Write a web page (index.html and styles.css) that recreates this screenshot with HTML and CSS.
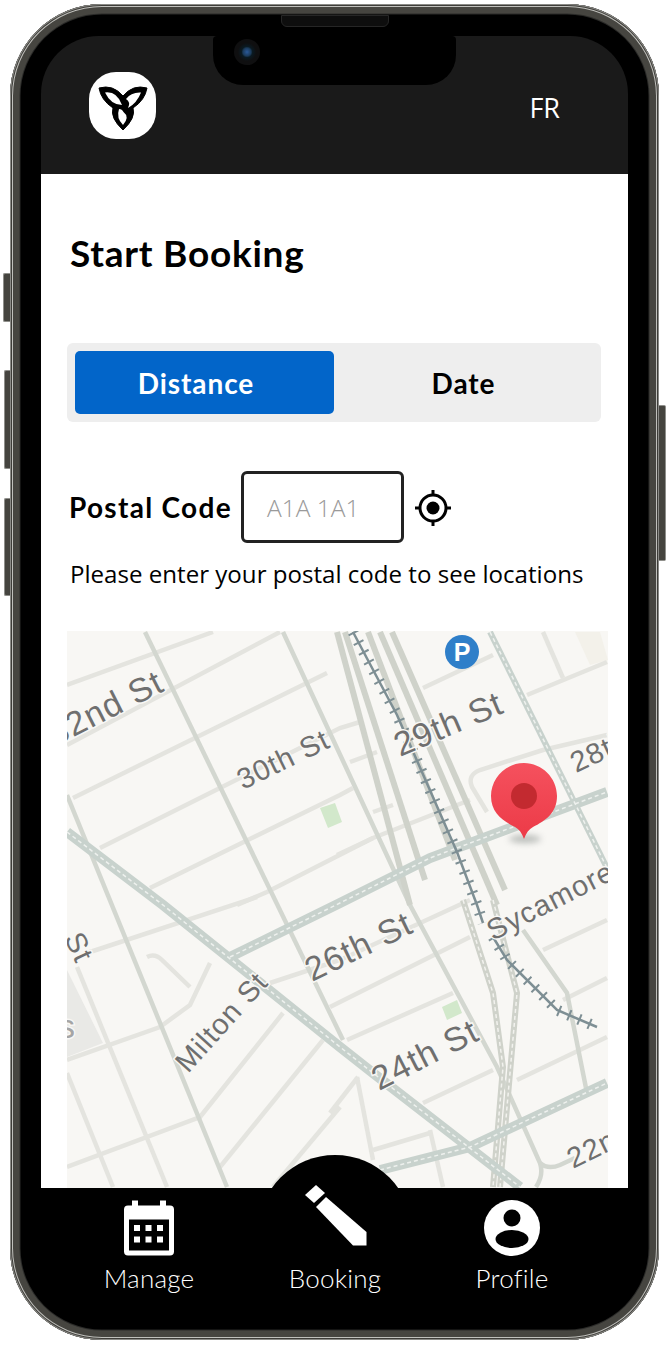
FILE: index.html
```html
<!DOCTYPE html>
<html lang="en">
<head>
<meta charset="utf-8">
<title>Start Booking</title>
<link rel="stylesheet" href="styles.css">
</head>
<body>
<div class="phone">
  <span class="side side-a"></span><span class="side side-b"></span><span class="side side-c"></span><span class="side side-d"></span>
  <span class="speaker"></span>
  <div class="notch"><span class="camera"></span></div>
  <div class="screen">
    <header class="top">
      <div class="logo">
        <svg viewBox="89 72 67 67" width="67" height="67">
          <path class="tri" d="M99 88Q113 84 123 96Q133 84 147 88Q145 100 133 108Q136 118 123 130Q110 118 113 108Q101 100 99 88Z"/>
          <path class="tri-in" d="M105 92.500Q117 91 122 105Q111 105 105 92.500Z"/>
          <path class="tri-in" d="M141 92.500Q131 92 126 99Q131 102 128 108Q137 103 141 92.500Z"/>
          <path class="tri-in" d="M123.500 112Q130 117 123 125Q116 118 119 109Q122 109 123.500 112Z"/>
        </svg>
      </div>
      <span class="lang">FR</span>
    </header>
    <main class="content">
      <h1 class="title">Start Booking</h1>
      <div class="tabs">
        <div class="tab tab-on">Distance</div>
        <div class="tab">Date</div>
      </div>
      <div class="postal">
        <span class="postal-label">Postal Code</span>
        <div class="postal-input">A1A 1A1</div>
        <svg class="locate" viewBox="0 0 36 36" width="36" height="36">
          <circle class="loc-ring" cx="18" cy="18" r="13"/>
          <circle cx="18" cy="18" r="6.500"/>
          <path class="loc-tick" d="M18 0V6M18 30V36M0 18H6M30 18H36"/>
        </svg>
      </div>
      <p class="help">Please enter your postal code to see locations</p>
      <svg class="map" viewBox="67 631 541 557" width="541" height="557">
        <rect class="map-bg" x="67" y="631" width="541" height="557"/>
        <polygon class="m-area" points="67,970 103,1043 67,1057"/>
        <polygon class="m-area m-area-light" points="575,632 600,632 608,660 590,665"/>
        <polygon class="m-park" points="320,808 335,803 342,822 328,828"/>
        <polygon class="m-park" points="442,1007 457,1000 462,1013 447,1020"/>
        <g class="m-minor">
          <path d="M67 685L213 632"/><path d="M67 745L280 632"/><path d="M73 798L327 673"/>
          <path d="M100 848L340 728L360 722"/><path d="M150 888L340 795L353 788"/><path d="M237 905L267 892L373 838"/>
          <path d="M423 688L493 655"/><path d="M527 695L607 662"/><path d="M543 632L563 678"/>
          <path d="M350 762L377 752"/><path d="M373 812L393 805"/>
          <path d="M607 735L543 750L480 770Q467 775 472 787L487 812"/>
          <path d="M87 953L257 897"/><path d="M147 957Q155 953 162 960L190 987"/>
          <path d="M67 1060L160 1027L190 1005L210 963"/><path d="M67 1167L200 1117L283 1013"/>
          <path d="M220 1167L323 1040"/><path d="M270 983L340 960L470 900"/><path d="M273 1187L340 1107"/>
          <path d="M77 967L167 1187"/><path d="M67 1073L113 1187"/>
          <path d="M330 1007L470 937"/><path d="M543 950L607 920"/><path d="M347 1040L453 993"/>
          <path d="M423 1103L493 1070"/><path d="M517 1080L607 1037"/><path d="M563 1000L607 978"/>
          <path d="M373 1150L430 1133"/><path d="M357 1077L373 1160"/><path d="M430 1130L443 1187"/><path d="M330 1113L358 1077"/>
          <path d="M337 855L373 838L470 800"/>
        </g>
        <g class="m-mid">
          <path d="M145 632L343 1040"/>
          <path d="M283 632L410 905L497 1067L540 1163Q544 1175 536 1187"/>
          <path d="M67 795L227 1187"/>
          <path d="M523 930L567 993L587 1093"/>
          <path d="M540 1163Q548 1170 560 1165L575 1158"/>
        </g>
        <g class="m-high">
          <path d="M337 632L410 905"/><path d="M345 632L425 880"/><path d="M368 632L455 860"/><path d="M380 632L497 905"/><path d="M392 632L505 890"/>
          <path d="M463 900L493 993L503 1067L493 1187"/><path d="M493 900L517 993L500 1187"/>
        </g>
        <g class="m-high-dash">
          <path d="M463 900L493 993L503 1067L493 1187"/><path d="M493 900L517 993L500 1187"/>
        </g>
        <g class="m-way">
          <path d="M67 832L163 905L340 1047L373 1073L520 1187"/>
          <path d="M230 957L340 903L430 858L607 792"/>
          <path d="M380 1170L470 1147L607 1083"/>
          <path class="m-way-thin" d="M490 632L607 868"/>
        </g>
        <g class="m-way-dash">
          <path d="M67 832L163 905L340 1047L373 1073L520 1187"/>
          <path d="M230 957L340 903L430 858L607 792"/>
          <path d="M380 1170L470 1147L607 1083"/>
          <path d="M490 632L607 868"/>
        </g>
        <g class="m-rail">
          <path d="M353 632L397 715L457 852L477 905L483 923"/>
          <path d="M493 937L507 960L520 973L557 1010L597 1027"/>
        </g>
        <g class="m-tie">
          <path d="M353 632L397 715L457 852L477 905L483 923"/>
          <path d="M493 937L507 960L520 973L557 1010L597 1027"/>
        </g>
        <text class="m-label" transform="translate(166 690) rotate(-27)" text-anchor="end">32nd St</text>
        <text class="m-label m-small" transform="translate(243 790) rotate(-26)">30th St</text>
        <text class="m-label" transform="translate(400 757) rotate(-23)">29th St</text>
        <text class="m-label m-small" transform="translate(576 773) rotate(-25)">28th</text>
        <text class="m-label m-small" transform="translate(493 941) rotate(-27)">Sycamore</text>
        <text class="m-label" transform="translate(312 982) rotate(-26)">26th St</text>
        <text class="m-label m-small" transform="translate(188 1074) rotate(-48)">Milton St</text>
        <text class="m-label" transform="translate(379 1091) rotate(-27)">24th St</text>
        <text class="m-label m-small" transform="translate(573 1169) rotate(-26)">22nd</text>
        <text class="m-label m-small" transform="translate(64 938) rotate(65)">St</text>
        <text class="m-label m-faint" x="58" y="1038">s</text>
        <circle class="m-p-bg" cx="462" cy="652" r="17"/>
        <text class="m-p" x="462" y="661" text-anchor="middle">P</text>
        <ellipse class="m-shadow" cx="525" cy="839" rx="16" ry="4"/>
        <defs>
          <linearGradient id="pinfill" x1="0" y1="0" x2="0" y2="1">
            <stop offset="0" stop-color="#f5515e"/>
            <stop offset="1" stop-color="#ec3a47"/>
          </linearGradient>
        </defs>
        <path fill="url(#pinfill)" d="M524 763C506 763 491 778 491 796C491 813 503 821 515 827C519 829 522 833 524 839C526 833 529 829 533 827C545 821 557 813 557 796C557 778 542 763 524 763Z"/>
        <circle class="m-pin-in" cx="524" cy="796" r="13"/>
      </svg>
    </main>
    <nav class="nav">
      <div class="nav-item">
        <svg class="nav-icon" viewBox="124 1201 50 55" width="50" height="55">
          <path class="w" d="M132 1201H138V1206H160V1201H166V1206H170Q174 1206 174 1210V1252Q174 1256 170 1256H128Q124 1256 124 1252V1210Q124 1206 128 1206H132Z"/>
          <rect class="k" x="129" y="1220" width="40" height="31"/>
          <path class="w" d="M134 1225.500h6v6h-6zM145.500 1225.500h6v6h-6zM157 1225.500h6v6h-6zM134 1237h6v6h-6zM145.500 1237h6v6h-6zM157 1237h6v6h-6z"/>
        </svg>
        <span class="nav-text">Manage</span>
      </div>
      <div class="nav-item">
        <svg class="nav-icon nav-pencil" viewBox="303 1183 63 63" width="63" height="63">
          <path class="w" d="M304 1195L315 1185L324 1193L313 1203Z"/>
          <path class="w" d="M315 1207L325 1197L365.500 1232V1245.500H352Z"/>
        </svg>
        <span class="nav-text">Booking</span>
      </div>
      <div class="nav-item">
        <svg class="nav-icon" viewBox="484 1200 56 56" width="56" height="56">
          <circle class="w" cx="512" cy="1228" r="28"/>
          <circle class="k" cx="512" cy="1218" r="8.500"/>
          <ellipse class="k" cx="512" cy="1239" rx="16.500" ry="9"/>
        </svg>
        <span class="nav-text">Profile</span>
      </div>
    </nav>
  </div>
</div>
</body>
</html>
```
FILE: styles.css
```css
* { box-sizing: border-box; }
html, body { margin: 0; padding: 0; background: #fff; }
body { width: 672px; height: 1348px; overflow: hidden; font-family: "Open Sans", sans-serif; }

.phone {
  position: relative;
  width: 649px;
  height: 1336px;
  margin: 4px 0 0 10px;
  padding: 32px 31px 12px;
  background: #000;
  border-radius: 92px;
  box-shadow:
    inset 0 0 0 1px #8a8a86,
    inset 0 0 0 2px #3e3d39,
    inset 0 0 0 3px #c0c0bc,
    inset 0 0 0 9.500px #464540,
    inset 0 0 0 10.500px #2a2a28;
}
.side { position: absolute; width: 7px; background: #45443f; border: 1px solid #8f8f8b; border-right: 0; border-radius: 2px 0 0 2px; }
.side-a { left: -7px; top: 269px; height: 49px; }
.side-b { left: -6px; top: 366px; height: 99px; width: 6px; }
.side-c { left: -6px; top: 494px; height: 98px; width: 6px; }
.side-d { left: 649px; top: 401px; height: 156px; width: 7px; border: 1px solid #8f8f8b; border-left: 0; border-radius: 0 2px 2px 0; }
.speaker { position: absolute; left: 271px; top: 11px; width: 108px; height: 12px; background: #0e0e0e; border: 1px solid #262626; border-radius: 0 0 6px 6px; z-index: 3; }
.notch { position: absolute; left: 203px; top: 32px; width: 243px; height: 49px; background: #000; border-radius: 4px 4px 30px 30px; z-index: 2; }
.camera { position: absolute; left: 21px; top: 3px; width: 26px; height: 26px; border-radius: 50%; background: radial-gradient(circle at 50% 50%, #2a5a9a 0, #1b3a5a 22%, #0a1a22 30%, #0f0f10 50%, #0f0f10 100%); }

.screen { width: 587px; height: 1292px; display: flex; flex-direction: column; }

.top { height: 138px; flex: none; background: #1a1a1a; border-radius: 58px 58px 0 0; display: flex; align-items: flex-start; justify-content: space-between; padding: 36px 68px 0 48px; }
.logo { width: 67px; height: 67px; background: #fff; border-radius: 27px; }
.logo svg { display: block; }
.tri { fill: #000; stroke: #000; stroke-width: 1; stroke-linejoin: miter; }
.tri-in { fill: #fff; }
.lang { margin-top: 17px; color: #fff; font-size: 27px; line-height: 37px; }

.content { height: 1014px; flex: none; background: #fff; padding: 0 0 0 26px; overflow: hidden; }
.title { margin: 0; padding-top: 56px; height: 169px; font-family: Lato, sans-serif; font-weight: 700; font-size: 37px; letter-spacing: .75px; line-height: 46px; color: #000; padding-left: 3px; }
.tabs { width: 534px; height: 79px; padding: 8px; background: #eeeeee; border-radius: 6px; display: flex; }
.tab { width: 259px; flex: none; display: flex; align-items: center; justify-content: center; font-family: Lato, sans-serif; font-weight: 700; font-size: 28px; letter-spacing: .9px; color: #000; border-radius: 5px; }
.tab-on { background: #0265c9; color: #fff; padding-right: 17px; }
.postal { display: flex; align-items: center; margin-top: 49px; height: 72px; }
.postal-label { width: 174px; padding-left: 2px; font-family: Lato, sans-serif; font-weight: 700; font-size: 28px; letter-spacing: 1.300px; color: #000; white-space: nowrap; flex: none; }
.postal-input { width: 163px; height: 72px; flex: none; border: 3px solid #222; border-radius: 6px; padding-left: 23px; display: flex; align-items: center; font-size: 24.500px; font-weight: 300; color: #9a9a9a; }
.locate { margin: 2px 0 0 11px; flex: none; }
.loc-ring { fill: none; stroke: #000; stroke-width: 3; }
.loc-tick { stroke: #000; stroke-width: 3; fill: none; }
.help { margin: 15px 0 0 3px; font-size: 24.100px; line-height: 32px; color: #000; white-space: nowrap; }

.map { display: block; margin-top: 41px; font-family: "Liberation Sans", sans-serif; }
.map-bg { fill: #f8f7f4; }
.m-area { fill: #e9e9e6; }
.m-area-light { fill: #f3f1ea; }
.m-park { fill: #d2e8cb; }
.m-minor path { fill: none; stroke: #e4e4df; stroke-width: 4.500; }
.m-mid path { fill: none; stroke: #d3d7d0; stroke-width: 4.500; }
.m-high path { fill: none; stroke: #cfd2ca; stroke-width: 6; }
.m-high-dash path { fill: none; stroke: #f2f2ee; stroke-width: 1.500; stroke-dasharray: 4 3; }
.m-way path { fill: none; stroke: #c8d2cd; stroke-width: 10; }
.m-way .m-way-thin { stroke-width: 6; }
.m-way-dash path { fill: none; stroke: #eef1ee; stroke-width: 1.500; stroke-dasharray: 4 3; }
.m-rail path { fill: none; stroke: #7e8f94; stroke-width: 2.500; }
.m-tie path { fill: none; stroke: #7e8f94; stroke-width: 11; stroke-dasharray: 2 9; }
.m-label { font-size: 34px; letter-spacing: 1px; fill: #6f6f6f; stroke: #f8f7f4; stroke-width: 3px; paint-order: stroke; }
.m-small { font-size: 29px; }
.m-faint { fill: #a5a5a5; }
.m-p-bg { fill: #2f7fc9; }
.m-p { font-size: 25px; font-weight: 700; fill: #fff; }
.m-shadow { fill: #7d8480; opacity: .5; filter: blur(3px); }
.m-pin-in { fill: #c32a30; }

.nav { position: relative; height: 140px; flex: none; background: #000; display: grid; grid-template-columns: 216px 156px 198px; padding-top: 12px; border-radius: 0 0 60px 60px; }
.nav::before { content: ""; position: absolute; left: 217px; top: -33px; width: 154px; height: 154px; border-radius: 50%; background: #000; }
.nav-item { position: relative; display: flex; flex-direction: column; align-items: center; }
.nav-icon { display: block; height: 56px; }
.nav-pencil { margin-top: -17px; margin-bottom: 10px; height: 63px; }
.nav-text { margin-top: 5px; font-family: Lato, sans-serif; font-weight: 300; font-size: 26px; letter-spacing: .2px; line-height: 34px; color: #fff; }
.w { fill: #fff; }
.k { fill: #000; }
```
